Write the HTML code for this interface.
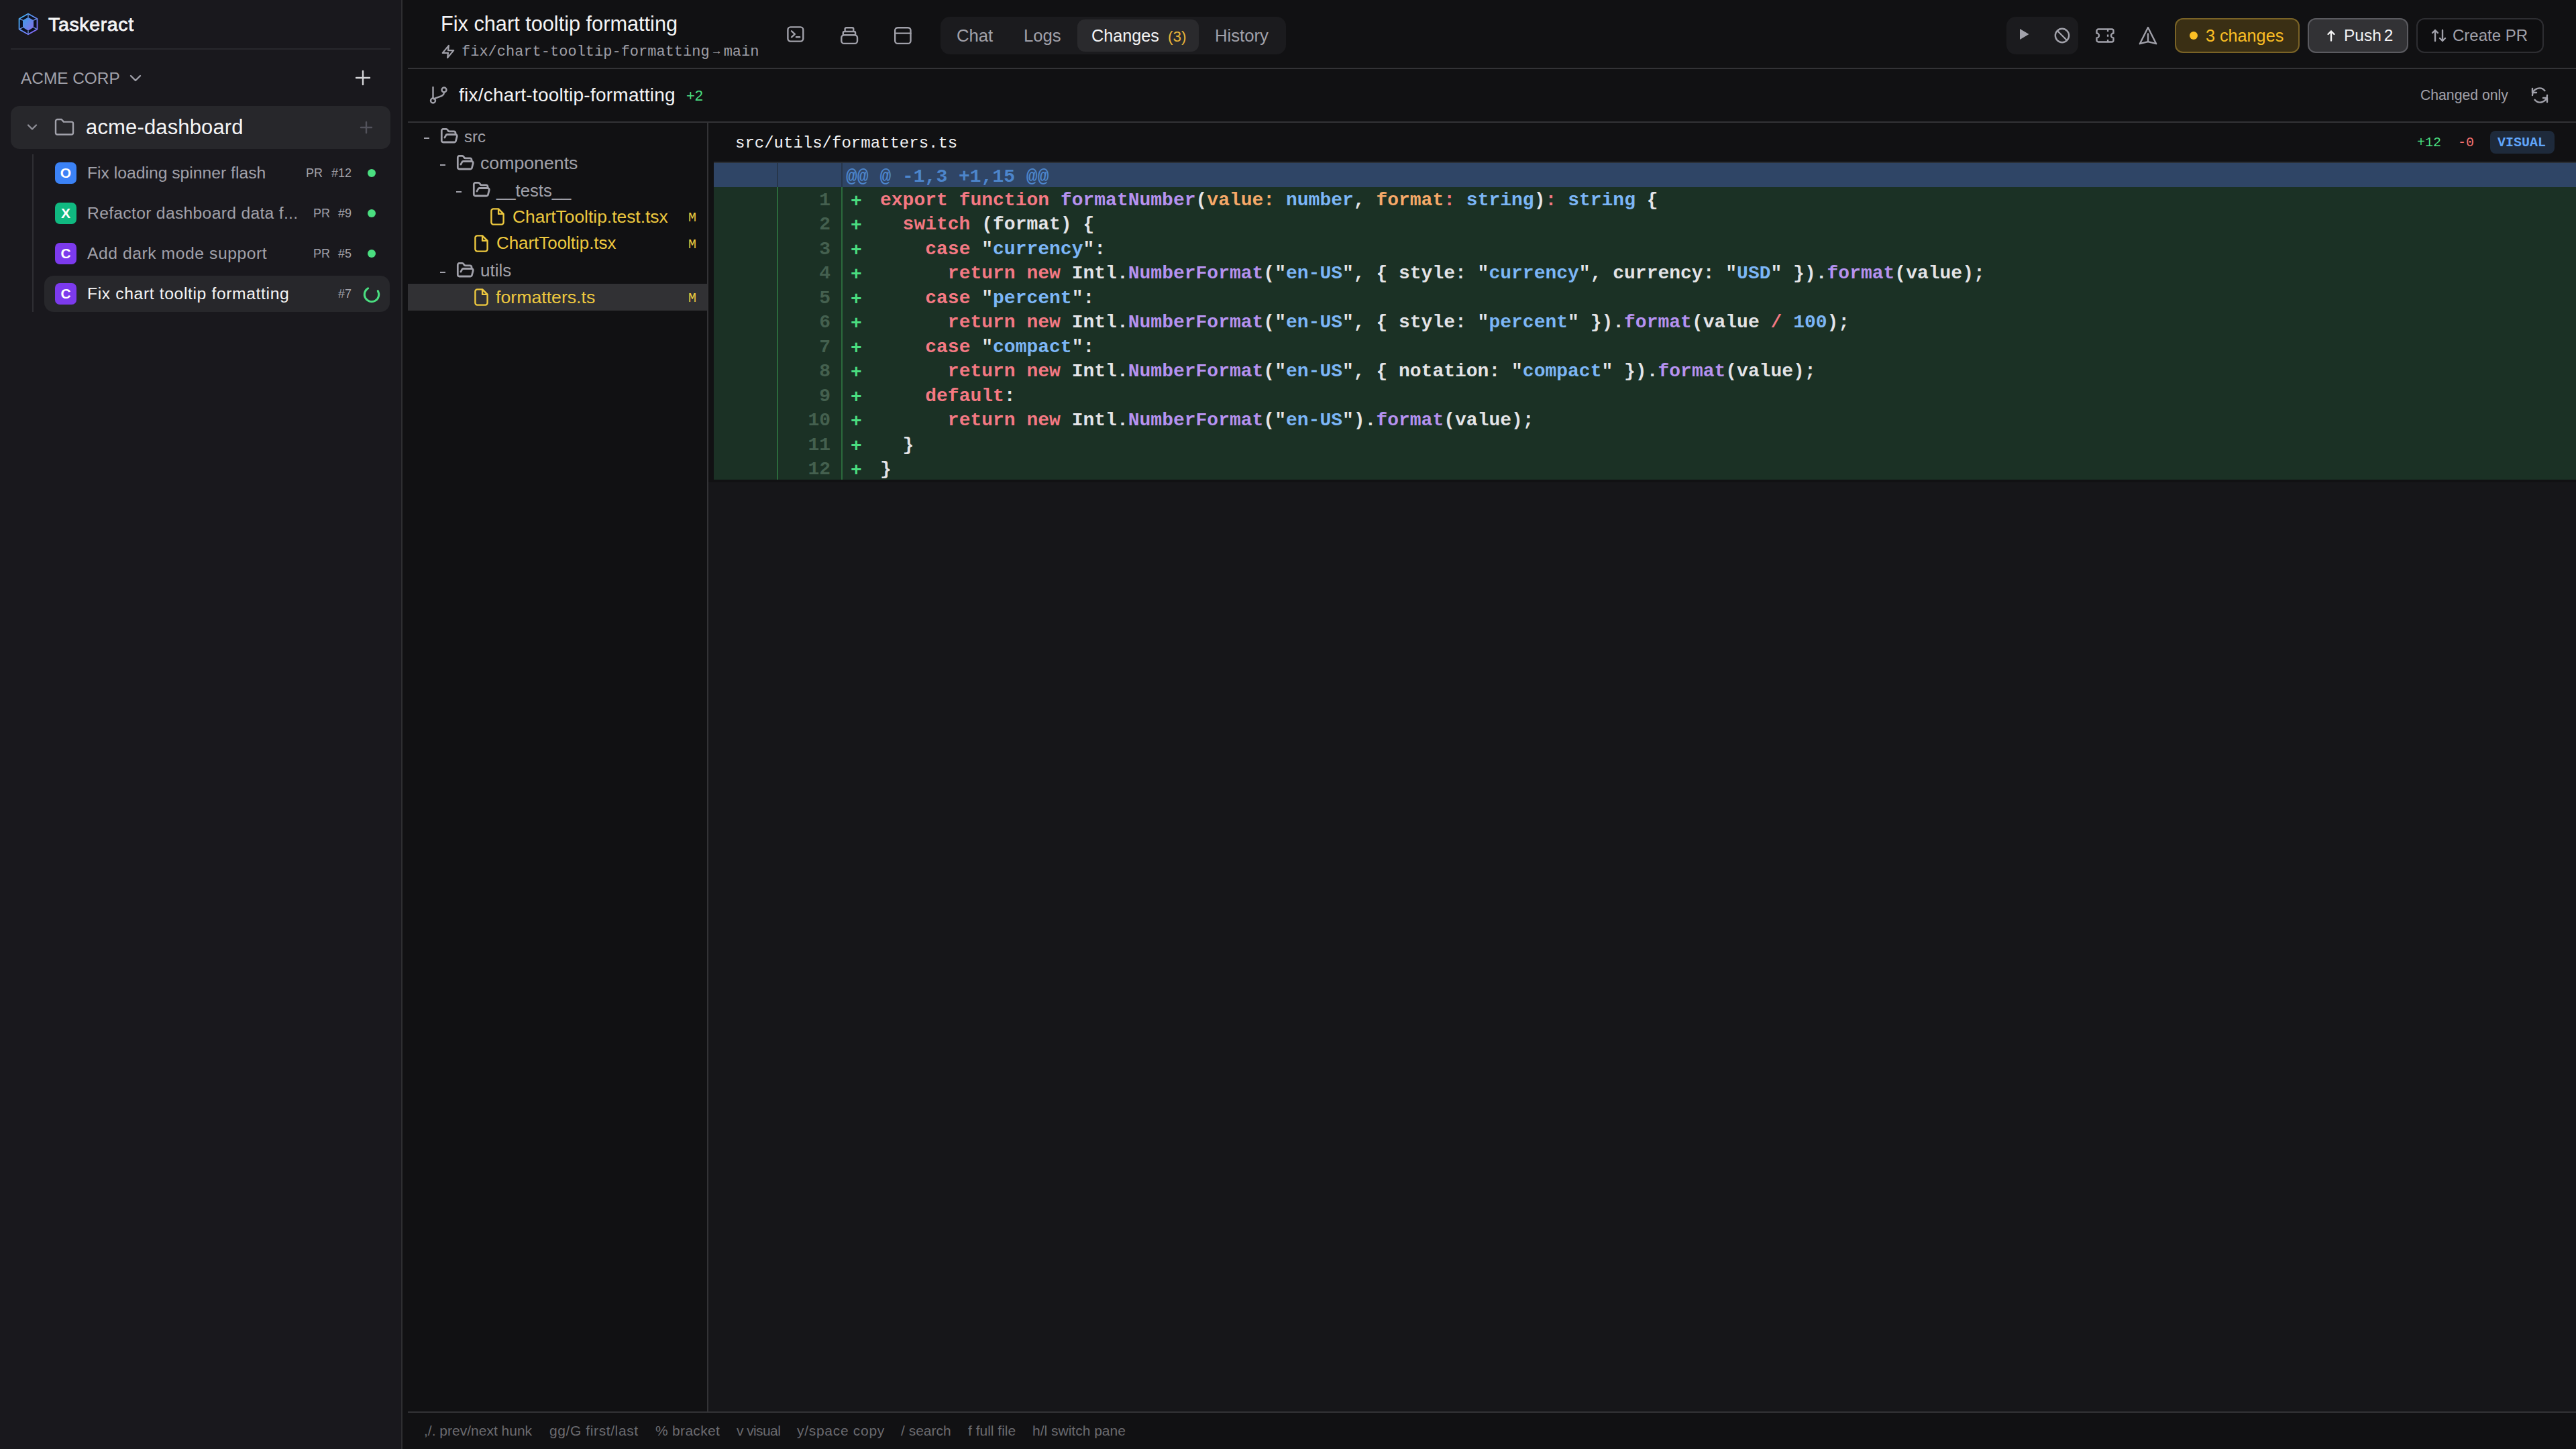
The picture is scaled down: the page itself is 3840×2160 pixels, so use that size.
<!DOCTYPE html>
<html><head><meta charset="utf-8">
<style>
*{box-sizing:border-box;margin:0;padding:0}
html,body{width:3840px;height:2160px;overflow:hidden;background:#111113;font-family:"Liberation Sans",sans-serif;color:#f4f4f5}
.a{position:absolute}
.t{position:absolute;white-space:pre;line-height:1}
.mono{font-family:"Liberation Mono",monospace}
svg{position:absolute;overflow:visible}
#sb{left:0;top:0;width:600px;height:2160px;background:#19181d;border-right:2px solid #2e2e31}
.ico{fill:none;stroke:#a1a1aa;stroke-width:2.4;stroke-linecap:round;stroke-linejoin:round}
.tk{position:absolute;left:82px;width:32px;height:32px;border-radius:7px;color:#fff;font-weight:bold;font-size:21px;line-height:32px;text-align:center}
.tt{position:absolute;left:130px;font-size:24.7px;color:#a1a1aa;white-space:pre;line-height:1}
.pr{position:absolute;font-size:18px;color:#a1a1aa;white-space:pre;line-height:1}
.dot{position:absolute;left:548px;width:12px;height:12px;border-radius:6px;background:#4ade80}
.fr{position:absolute;font-size:26px;color:#a1a1aa;white-space:pre;line-height:1}
.fy{color:#eec93f}
.m{position:absolute;left:1026px;font-size:20px;color:#eec93f;font-family:"Liberation Mono",monospace;line-height:1}
.code{position:absolute;left:1312px;font-family:"Liberation Mono",monospace;font-weight:bold;font-size:28px;line-height:36.45px;white-space:pre;color:#e4e4e7}
.ln{position:absolute;white-space:pre;left:1160px;width:80px;text-align:right;font-family:"Liberation Mono",monospace;font-weight:bold;font-size:28px;line-height:36.45px;color:#44604f}
.pl{position:absolute;white-space:pre;left:1268px;font-family:"Liberation Mono",monospace;font-weight:bold;font-size:28px;line-height:36.45px;color:#4ade80}
.k{color:#f47983}.f{color:#b692f0}.p{color:#f6a969}.y{color:#7cb6f6}
.ft{position:absolute;top:2122px;font-size:21px;color:#6b6b70;white-space:pre;line-height:1}
@media (max-width:3000px){html{zoom:0.5}}
</style></head><body>
<!-- SIDEBAR -->
<div id="sb" class="a"></div>
<svg style="left:26px;top:18px" width="34" height="36" viewBox="26 18 34 36">
 <defs><linearGradient id="lg" x1="0" y1="0" x2="1" y2="1"><stop offset="0" stop-color="#38bdf8"/><stop offset="1" stop-color="#8b5cf6"/></linearGradient>
 <linearGradient id="lg2" x1="0" y1="0" x2="1" y2="1"><stop offset="0" stop-color="#3b9ee6"/><stop offset="1" stop-color="#8a6ee8"/></linearGradient></defs>
 <polygon points="42,20.5 55.5,28 55.5,43.6 42,51.3 28.6,43.6 28.6,28" fill="#0c1020" stroke="url(#lg)" stroke-width="1.8" stroke-linejoin="round"/>
 <polygon points="42,25.7 50,30.2 50,40.8 42,45.7 34,40.8 34,30.2" fill="url(#lg2)"/>
 <path d="M42 20.5V25.7M55.5 28L50 30.2M55.5 43.6L50 40.8M42 51.3V45.7M28.6 43.6L34 40.8M28.6 28L34 30.2" style="stroke:#6b8fd6" stroke-width="1.4"/>
</svg>
<div class="t" style="left:72px;top:22px;font-size:28.5px;-webkit-text-stroke:0.8px #f4f4f5;letter-spacing:0.65px;color:#f4f4f5">Taskeract</div>
<div class="a" style="left:16px;top:72px;width:566px;height:2px;background:#28282d"></div>
<div class="t" style="left:31px;top:105px;font-size:24.4px;color:#a1a1aa">ACME CORP</div>
<svg style="left:192px;top:110px" width="20" height="14" viewBox="0 0 20 14"><path d="M3 3l7 7 7-7" class="ico" stroke-width="2.2"/></svg>
<svg style="left:529px;top:104px" width="24" height="24" viewBox="0 0 24 24"><path d="M12 2v20M2 12h20" class="ico" style="stroke:#d4d4d8" stroke-width="2.6"/></svg>
<!-- project row -->
<div class="a" style="left:16px;top:158px;width:566px;height:64px;border-radius:13px;background:#27272b"></div>
<svg style="left:38px;top:182px" width="20" height="16" viewBox="0 0 20 16"><path d="M4 4.5l6 6 6-6" class="ico" style="stroke:#8e8e96" stroke-width="2.2"/></svg>
<svg style="left:80px;top:175px" width="32" height="28" viewBox="0 0 32 28"><path d="M3 23V5.5A2.5 2.5 0 0 1 5.5 3h6.2l3.2 3.6h11.6A2.5 2.5 0 0 1 29 9.1V23a2.5 2.5 0 0 1-2.5 2.5h-21A2.5 2.5 0 0 1 3 23z" class="ico" stroke-width="2.4"/></svg>
<div class="t" style="left:128px;top:174px;font-size:31px;letter-spacing:0.15px;color:#f4f4f5">acme-dashboard</div>
<svg style="left:536px;top:180px" width="20" height="20" viewBox="0 0 20 20"><path d="M10 2v16M2 10h16" class="ico" style="stroke:#52525b" stroke-width="2"/></svg>
<div class="a" style="left:48px;top:230px;width:2px;height:235px;background:#2e2e33"></div>
<!-- tasks -->
<div class="tk" style="top:242px;background:#3b82f6">O</div>
<div class="tt" style="top:246px">Fix loading spinner flash</div>
<div class="pr" style="left:456px;top:249px">PR</div><div class="pr" style="left:494px;top:249px">#12</div>
<div class="dot" style="top:252px"></div>
<div class="tk" style="top:302px;background:#10b981">X</div>
<div class="tt" style="top:306px;letter-spacing:0.3px">Refactor dashboard data f...</div>
<div class="pr" style="left:467px;top:309px">PR</div><div class="pr" style="left:504px;top:309px">#9</div>
<div class="dot" style="top:312px"></div>
<div class="tk" style="top:362px;background:#7c3aed">C</div>
<div class="tt" style="top:366px;letter-spacing:0.55px">Add dark mode support</div>
<div class="pr" style="left:467px;top:369px">PR</div><div class="pr" style="left:504px;top:369px">#5</div>
<div class="dot" style="top:372px"></div>
<div class="a" style="left:66px;top:411px;width:515px;height:54px;border-radius:14px;background:#27272b"></div>
<div class="tk" style="top:422px;background:#7c3aed">C</div>
<div class="tt" style="top:426px;color:#f4f4f5;letter-spacing:0.62px">Fix chart tooltip formatting</div>
<div class="pr" style="left:504px;top:429px">#7</div>
<svg style="left:541px;top:426px" width="26" height="26" viewBox="0 0 26 26"><path d="M22.27 7.65A10.7 10.7 0 1 1 7.65 3.73" fill="none" style="stroke:#4ade80" stroke-width="3" stroke-linecap="round"/></svg>

<!-- MAIN HEADER -->
<div class="t" style="left:657px;top:21px;font-size:30.7px;color:#f4f4f5">Fix chart tooltip formatting</div>
<svg style="left:656px;top:66px" width="24" height="22" viewBox="0 0 24 24"><path d="M13 2L3 14h9l-1 8 10-12h-9l1-8z" class="ico" stroke-width="2.2"/></svg>
<div class="t mono" style="left:688px;top:67px;font-size:22px;color:#9f9fa7">fix/chart-tooltip-formatting<span style="display:inline-block;width:21px;font-size:17px;position:relative;top:-2px;text-align:center">→</span>main</div>
<svg style="left:1171px;top:37px" width="30" height="30" viewBox="0 0 30 30"><rect x="3.4" y="3.4" width="22.9" height="21.2" rx="4" class="ico" stroke-width="2.8"/><path d="M9 9.3l4.9 4.5L9 18.3M15.9 18.3h5.3" class="ico" stroke-width="2.8"/></svg>
<svg style="left:1251px;top:38px" width="30" height="30" viewBox="0 0 30 30"><rect x="3.3" y="14.2" width="23.7" height="12.7" rx="4" class="ico" stroke-width="2.8"/><path d="M5.8 14.2V11a2 2 0 0 1 2-2h14.3a2 2 0 0 1 2 2v3.2M8.6 8.9V5.2a2 2 0 0 1 2-2h8.7a2 2 0 0 1 2 2v3.7" class="ico" stroke-width="2.8"/></svg>
<svg style="left:1331px;top:38px" width="30" height="30" viewBox="0 0 30 30"><rect x="3.2" y="3.2" width="23.3" height="23.7" rx="4" class="ico" stroke-width="2.8"/><path d="M3.2 11.6h23.3" class="ico" stroke-width="2.8"/></svg>
<!-- tabs -->
<div class="a" style="left:1402px;top:25px;width:515px;height:56px;border-radius:14px;background:#1b1b1e"></div>
<div class="a" style="left:1606px;top:29px;width:181px;height:48px;border-radius:11px;background:#2a2a2d"></div>
<div class="t" style="left:1426px;top:41px;font-size:25.7px;color:#a1a1aa">Chat</div>
<div class="t" style="left:1526px;top:41px;font-size:25.7px;color:#a1a1aa">Logs</div>
<div class="t" style="left:1627px;top:41px;font-size:25.2px;color:#f4f4f5">Changes</div>
<div class="t" style="left:1741px;top:44px;font-size:22.5px;color:#e9b53a">(3)</div>
<div class="t" style="left:1811px;top:41px;font-size:25.7px;color:#a1a1aa">History</div>
<!-- right header -->
<div class="a" style="left:2991px;top:25px;width:107px;height:56px;border-radius:14px;background:#1b1b1e"></div>
<svg style="left:3010px;top:42px" width="16" height="18" viewBox="0 0 16 18"><path d="M1 1L14.5 9 1 17z" fill="#a1a1aa"/></svg>
<svg style="left:3062px;top:41px" width="24" height="24" viewBox="0 0 24 24"><circle cx="12" cy="12" r="10.2" class="ico"/><path d="M5 5l14 14" class="ico"/></svg>
<svg style="left:3123px;top:41px" width="30" height="24" viewBox="0 0 30 24"><path d="M2.5 5A2.5 2.5 0 0 1 5 2.5h20A2.5 2.5 0 0 1 27.5 5v3.5a3.5 3.5 0 0 0 0 7V19a2.5 2.5 0 0 1-2.5 2.5H5A2.5 2.5 0 0 1 2.5 19v-3.5a3.5 3.5 0 0 0 0-7z" class="ico" stroke-width="2.6"/><path d="M19.1 3v3.2M19.1 10.4v3.3M19.1 18.1v3.5" class="ico" stroke-width="2.6" style="stroke-linecap:butt"/></svg>
<svg style="left:3188px;top:39px" width="28" height="28" viewBox="0 0 28 28"><path d="M14 2L26.2 26.2 14 23.2 1.8 26.2z" class="ico" stroke-width="2.4"/><path d="M14 11.5V23" class="ico" stroke-width="2.4"/></svg>
<div class="a" style="left:3242px;top:27px;width:186px;height:52px;border-radius:12px;background:#3a2f14;border:2px solid #7a6326"></div>
<div class="a" style="left:3264px;top:47px;width:12px;height:12px;border-radius:6px;background:#fbbf24"></div>
<div class="t" style="left:3288px;top:41px;font-size:25.2px;color:#fbbf24">3 changes</div>
<div class="a" style="left:3440px;top:27px;width:150px;height:52px;border-radius:12px;background:#323235;border:2px solid #5b5b60"></div>
<svg style="left:3467px;top:44px" width="16" height="20" viewBox="0 0 16 20"><path d="M8 16.5V2.5M3.5 7L8 2.5l4.5 4.5" class="ico" style="stroke:#f4f4f5" stroke-width="2.4"/></svg>
<div class="t" style="left:3494px;top:41px;font-size:24.5px;color:#f4f4f5;word-spacing:-3px">Push 2</div>
<div class="a" style="left:3602px;top:27px;width:190px;height:52px;border-radius:12px;background:#0e0e10;border:2px solid #2e2e32"></div>
<svg style="left:3624px;top:43px" width="24" height="20" viewBox="0 0 24 20"><path d="M6 18V2M2 6l4-4 4 4M17 2v16M13 14l4 4 4-4" class="ico" stroke-width="2.2"/></svg>
<div class="t" style="left:3656px;top:41px;font-size:24px;color:#a1a1aa">Create PR</div>
<div class="a" style="left:608px;top:101px;width:3232px;height:2px;background:#333336"></div>

<!-- BRANCH BAR -->
<svg style="left:640px;top:128px" width="28" height="28" viewBox="0 0 28 28"><circle cx="5.5" cy="22" r="3.5" class="ico"/><circle cx="22" cy="6" r="3.5" class="ico"/><path d="M5.5 2v16.5M22 9.5c0 7-9 6-15 10" class="ico"/></svg>
<div class="t" style="left:684px;top:128px;font-size:28px;letter-spacing:0.25px;color:#f4f4f5">fix/chart-tooltip-formatting</div>
<div class="t" style="left:1023px;top:132px;font-size:22px;color:#4ade80">+2</div>
<div class="t" style="left:3608px;top:131px;font-size:21.2px;color:#a1a1aa">Changed only</div>
<svg style="left:3772px;top:129px" width="28" height="26" viewBox="0 0 28 26"><path d="M3 13a10.5 10.5 0 0 1 18.5-6.8M25 13a10.5 10.5 0 0 1-18.5 6.8" class="ico" stroke-width="2.4"/><path d="M3 3v6h6M25 23v-6h-6" class="ico" stroke-width="2.4"/></svg>
<div class="a" style="left:608px;top:181px;width:3232px;height:2px;background:#333336"></div>

<div class="a" style="left:1056px;top:719px;width:2784px;height:1385px;background:#161619"></div>
<!-- FILE TREE -->
<div class="a" style="left:1054px;top:183px;width:2px;height:1922px;background:#333336"></div>
<div class="a" style="left:608px;top:423px;width:446px;height:40px;background:#313134"></div>
<div class="a" style="left:632px;top:205px;width:8px;height:2px;background:#a1a1aa"></div><svg style="left:656px;top:189px" width="28" height="28" viewBox="0 0 24.35 24.35"><path d="m6 14 1.5-2.9A2 2 0 0 1 9.24 10H20a2 2 0 0 1 1.94 2.5l-1.54 6a2 2 0 0 1-1.95 1.5H4a2 2 0 0 1-2-2V5a2 2 0 0 1 2-2h3.9a2 2 0 0 1 1.69.9l.81 1.2a2 2 0 0 0 1.67.9H18a2 2 0 0 1 2 2v2" class="ico" stroke-width="2.4"/></svg><div class="fr" style="left:692px;top:192px;font-size:24px">src</div>
<div class="a" style="left:656px;top:245px;width:8px;height:2px;background:#a1a1aa"></div><svg style="left:680px;top:229px" width="28" height="28" viewBox="0 0 24.35 24.35"><path d="m6 14 1.5-2.9A2 2 0 0 1 9.24 10H20a2 2 0 0 1 1.94 2.5l-1.54 6a2 2 0 0 1-1.95 1.5H4a2 2 0 0 1-2-2V5a2 2 0 0 1 2-2h3.9a2 2 0 0 1 1.69.9l.81 1.2a2 2 0 0 0 1.67.9H18a2 2 0 0 1 2 2v2" class="ico" stroke-width="2.4"/></svg><div class="fr" style="left:716px;top:230px;font-size:26.7px">components</div>
<div class="a" style="left:680px;top:285px;width:8px;height:2px;background:#a1a1aa"></div><svg style="left:704px;top:269px" width="28" height="28" viewBox="0 0 24.35 24.35"><path d="m6 14 1.5-2.9A2 2 0 0 1 9.24 10H20a2 2 0 0 1 1.94 2.5l-1.54 6a2 2 0 0 1-1.95 1.5H4a2 2 0 0 1-2-2V5a2 2 0 0 1 2-2h3.9a2 2 0 0 1 1.69.9l.81 1.2a2 2 0 0 0 1.67.9H18a2 2 0 0 1 2 2v2" class="ico" stroke-width="2.4"/></svg><div class="fr" style="left:740px;top:272px;font-size:25.7px">__tests__</div>
<svg style="left:731px;top:310px" width="21" height="26" viewBox="0 0 21 26"><path d="M12.1 1.4H4.4a3 3 0 0 0-3 3v17.2a3 3 0 0 0 3 3h12.2a3 3 0 0 0 3-3V8.9zM12.1 1.4v7.5h7.5" class="ico" style="stroke:#eec93f" stroke-width="2.8"/></svg><div class="fr fy" style="left:764px;top:310px;font-size:26.4px">ChartTooltip.test.tsx</div><div class="m" style="top:315px">M</div>
<svg style="left:707px;top:350px" width="21" height="26" viewBox="0 0 21 26"><path d="M12.1 1.4H4.4a3 3 0 0 0-3 3v17.2a3 3 0 0 0 3 3h12.2a3 3 0 0 0 3-3V8.9zM12.1 1.4v7.5h7.5" class="ico" style="stroke:#eec93f" stroke-width="2.8"/></svg><div class="fr fy" style="left:740px;top:350px;font-size:25.9px">ChartTooltip.tsx</div><div class="m" style="top:355px">M</div>
<div class="a" style="left:656px;top:405px;width:8px;height:2px;background:#a1a1aa"></div><svg style="left:680px;top:389px" width="28" height="28" viewBox="0 0 24.35 24.35"><path d="m6 14 1.5-2.9A2 2 0 0 1 9.24 10H20a2 2 0 0 1 1.94 2.5l-1.54 6a2 2 0 0 1-1.95 1.5H4a2 2 0 0 1-2-2V5a2 2 0 0 1 2-2h3.9a2 2 0 0 1 1.69.9l.81 1.2a2 2 0 0 0 1.67.9H18a2 2 0 0 1 2 2v2" class="ico" stroke-width="2.4"/></svg><div class="fr" style="left:716px;top:390px;font-size:26px">utils</div>
<svg style="left:707px;top:430px" width="21" height="26" viewBox="0 0 21 26"><path d="M12.1 1.4H4.4a3 3 0 0 0-3 3v17.2a3 3 0 0 0 3 3h12.2a3 3 0 0 0 3-3V8.9zM12.1 1.4v7.5h7.5" class="ico" style="stroke:#eec93f" stroke-width="2.8"/></svg><div class="fr fy" style="left:739px;top:430px;font-size:26.7px">formatters.ts</div><div class="m" style="top:435px">M</div>

<!-- DIFF -->
<div class="t mono" style="left:1096px;top:202px;font-size:24px;color:#f4f4f5">src/utils/formatters.ts</div>
<div class="t mono" style="left:3603px;top:203px;font-size:20px;color:#4ade80">+12</div>
<div class="t mono" style="left:3664px;top:203px;font-size:20px;color:#f87171">-0</div>
<div class="a" style="left:3712px;top:195px;width:96px;height:34px;border-radius:8px;background:#1e2a3b"></div>
<div class="t mono" style="left:3723px;top:203px;font-size:20px;font-weight:bold;color:#60a5fa">VISUAL</div>
<div class="a" style="left:1064px;top:241px;width:2776px;height:2px;background:#2a2f36"></div>
<div class="a" style="left:1064px;top:243px;width:2776px;height:36px;background:#2f4566"></div>
<div class="a" style="left:1064px;top:279px;width:2776px;height:436px;background:#1b3125"></div>
<div class="a" style="left:1158px;top:243px;width:2px;height:36px;background:#27364a"></div>
<div class="a" style="left:1254px;top:243px;width:2px;height:36px;background:#27364a"></div>
<div class="a" style="left:1158px;top:279px;width:2px;height:436px;background:#2b6a3c"></div>
<div class="a" style="left:1254px;top:279px;width:2px;height:436px;background:#2b6a3c"></div>
<div class="code" style="left:1261px;top:246px;color:#4d86cc">@@ @ -1,3 +1,15 @@</div>
<div class="ln" style="left:1158px;top:281px">1
2
3
4
5
6
7
8
9
10
11
12</div>
<div class="pl" style="top:283px">+
+
+
+
+
+
+
+
+
+
+
+</div>
<div class="code" style="top:281px"><span class="k">export</span> <span class="k">function</span> <span class="f">formatNumber</span>(<span class="p">value:</span> <span class="y">number</span>, <span class="p">format</span><span class="k">:</span> <span class="y">string</span>)<span class="k">:</span> <span class="y">string</span> {
  <span class="k">switch</span> (format) {
    <span class="k">case</span> "<span class="y">currency</span>":
      <span class="k">return</span> <span class="k">new</span> Intl.<span class="f">NumberFormat</span>("<span class="y">en-US</span>", { style: "<span class="y">currency</span>", currency: "<span class="y">USD</span>" }).<span class="f">format</span>(value);
    <span class="k">case</span> "<span class="y">percent</span>":
      <span class="k">return</span> <span class="k">new</span> Intl.<span class="f">NumberFormat</span>("<span class="y">en-US</span>", { style: "<span class="y">percent</span>" }).<span class="f">format</span>(value <span class="k">/</span> <span class="y">100</span>);
    <span class="k">case</span> "<span class="y">compact</span>":
      <span class="k">return</span> <span class="k">new</span> Intl.<span class="f">NumberFormat</span>("<span class="y">en-US</span>", { notation: "<span class="y">compact</span>" }).<span class="f">format</span>(value);
    <span class="k">default</span>:
      <span class="k">return</span> <span class="k">new</span> Intl.<span class="f">NumberFormat</span>("<span class="y">en-US</span>").<span class="f">format</span>(value);
  }
}</div>

<!-- FOOTER -->
<div class="a" style="left:608px;top:2104px;width:3232px;height:2px;background:#333336"></div>
<div class="ft" style="left:632px">,/. prev/next hunk</div>
<div class="ft" style="left:819px;letter-spacing:0.6px">gg/G first/last</div>
<div class="ft" style="left:977px;letter-spacing:0.3px">% bracket</div>
<div class="ft" style="left:1098px;letter-spacing:-0.6px">v visual</div>
<div class="ft" style="left:1188px;letter-spacing:0.7px">y/space copy</div>
<div class="ft" style="left:1343px">/ search</div>
<div class="ft" style="left:1443px">f full file</div>
<div class="ft" style="left:1539px">h/l switch pane</div>
</body></html>
